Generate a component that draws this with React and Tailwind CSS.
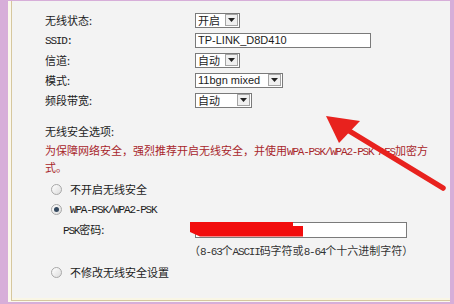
import React from 'react';

const cjk = "font-['Noto_Sans_CJK_SC',sans-serif]";

function M({ children }) {
  // 宋体的半角西文：窄等宽
  return <span className="font-['Liberation_Mono',monospace] tracking-[-1.2px]">{children}</span>;
}

function Caret() {
  return (
    <div className="w-[13px] h-[12px] border border-[#a4a4a4] bg-[#f0f0f0] flex items-center justify-center">
      <svg width="7" height="4" viewBox="0 0 7 4">
        <path d="M0 0H7L3.5 4Z" fill="#222" />
      </svg>
    </div>
  );
}

function FakeSelect({ value, width, latin }) {
  return (
    <div
      className={`h-[15px] border border-[#7a7a7a] bg-white flex items-center justify-between pl-[2px] pr-px ${width}`}
    >
      <span className={latin ? "font-['Liberation_Sans',sans-serif] text-[11px] leading-none" : 'text-[11px] leading-none'}>
        {value}
      </span>
      <Caret />
    </div>
  );
}

function Row({ label, children }) {
  return (
    <div className="flex items-center h-5">
      <div className="w-[150px]">{label}</div>
      {children}
    </div>
  );
}

function Radio({ checked }) {
  return (
    <div className="w-[11px] h-[11px] rounded-full border border-[#a8a8a8] bg-gradient-to-br from-white to-[#dcdcdc] flex items-center justify-center">
      {checked && <div className="w-[5px] h-[5px] rounded-full bg-[#34495f]" />}
    </div>
  );
}

export default function App() {
  return (
    <div className="relative w-[454px] h-[304px] bg-[#d7aed9] pl-2 pt-px pr-1 pb-[2px] overflow-hidden">
      <div className="h-full bg-[#fbf8ec] pl-[3px] pb-px">
        <div className="h-full border-l border-b border-[#d6c79e] bg-[#f3f3f3]">
          <div className={`h-full border-b-2 border-[#f9f6e6] pl-[33px] pt-[9px] text-[11px] text-[#1c1c1c] ${cjk}`}>
            <Row label="无线状态:">
              <FakeSelect value="开启" width="w-[45px]" />
            </Row>
            <Row label={<M>SSID:</M>}>
              <div className="w-[176px] h-[15px] border border-[#7a7a7a] bg-white flex items-center pl-[2px]">
                <span className="font-['Liberation_Sans',sans-serif] text-[11px] leading-none">TP-LINK_D8D410</span>
              </div>
            </Row>
            <Row label="信道:">
              <FakeSelect value="自动" width="w-[45px]" />
            </Row>
            <Row label="模式:">
              <FakeSelect value="11bgn mixed" width="w-[88px]" latin />
            </Row>
            <Row label="频段带宽:">
              <FakeSelect value="自动" width="w-[57px]" />
            </Row>

            <div className="mt-3 h-[18px] leading-[18px]">无线安全选项:</div>
            <div className="mt-[2px] text-[#a8262b]">
              <div className="h-[17px] leading-[17px] whitespace-nowrap overflow-visible">
                为保障网络安全，强烈推荐开启无线安全，并使用<M>WPA-PSK/WPA2-PSK AES</M>加密方
              </div>
              <div className="h-[17px] leading-[17px]">式。</div>
            </div>

            <div className="mt-1 h-[18px] flex items-center">
              <div className="ml-[6px]"><Radio /></div>
              <span className="ml-2">不开启无线安全</span>
            </div>
            <div className="mt-[2px] h-[18px] flex items-center">
              <div className="ml-[6px]"><Radio checked /></div>
              <span className="ml-2"><M>WPA-PSK/WPA2-PSK</M></span>
            </div>
            <div className="mt-[3px] h-[18px] flex items-center">
              <div className="ml-[18px] w-[132px]"><M>PSK</M>密码:</div>
              <div className="w-[212px] h-[16px] border border-[#7a7a7a] bg-white" />
            </div>
            <div className="mt-[2px] h-[18px] leading-[18px] ml-[144px] text-[#333] whitespace-nowrap">
              （<M>8-63</M>个<M>ASCII</M>码字符或<M>8-64</M>个十六进制字符）
            </div>
            <div className="mt-1 h-[18px] flex items-center">
              <div className="ml-[6px]"><Radio /></div>
              <span className="ml-2">不修改无线安全设置</span>
            </div>
          </div>
        </div>
      </div>

      <svg className="absolute inset-0 pointer-events-none" width="454" height="304" viewBox="0 0 454 304">
        <path d="M190 222H293V226H303V236.5H200L190 232Z" fill="#f20d0d" />
        <line x1="443" y1="188" x2="346" y2="129" stroke="#e8221e" strokeWidth="5.5" strokeLinecap="round" />
        <path d="M326 116L360 121L339 143Z" fill="#e8221e" />
      </svg>
    </div>
  );
}
